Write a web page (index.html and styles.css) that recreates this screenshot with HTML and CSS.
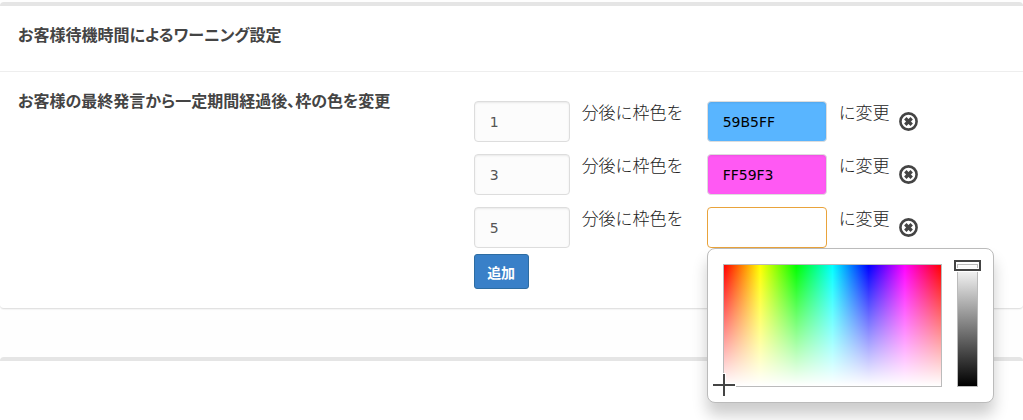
FILE: index.html
```html
<!DOCTYPE html>
<html lang="ja">
<head>
<meta charset="utf-8">
<meta name="viewport" content="width=device-width, initial-scale=1">
<title>ワーニング設定</title>
<link rel="stylesheet" href="styles.css">
</head>
<body>
<svg class="sprite" aria-hidden="true">
  <symbol id="remove" viewBox="0 0 19 19">
    <circle cx="9.5" cy="9.5" r="8.1" fill="none" stroke="currentColor" stroke-width="2.6"/>
    <path d="M6.3 6.3l6.4 6.4M12.7 6.3l-6.4 6.4" stroke="currentColor" stroke-width="3.4"/>
  </symbol>
</svg>
<main class="page">
  <section class="panel">
    <h2 class="panel-title">お客様待機時間によるワーニング設定</h2>
    <form class="panel-body">
      <h3 class="setting-label">お客様の最終発言から一定期間経過後、枠の色を変更</h3>
      <div class="rules">
        <div class="rule">
          <input class="field minutes" type="text" value="1" aria-label="分">
          <span class="after">分後に枠色を</span>
          <input class="field color blue" type="text" value="59B5FF" aria-label="枠色">
          <span class="change">に変更</span>
          <button class="remove" type="button" aria-label="削除"><svg class="icon"><use href="#remove"/></svg></button>
        </div>
        <div class="rule">
          <input class="field minutes" type="text" value="3" aria-label="分">
          <span class="after">分後に枠色を</span>
          <input class="field color pink" type="text" value="FF59F3" aria-label="枠色">
          <span class="change">に変更</span>
          <button class="remove" type="button" aria-label="削除"><svg class="icon"><use href="#remove"/></svg></button>
        </div>
        <div class="rule">
          <input class="field minutes" type="text" value="5" aria-label="分">
          <span class="after">分後に枠色を</span>
          <div class="picker-anchor">
            <input class="field color active" type="text" value="" aria-label="枠色">
            <div class="picker">
              <div class="spectrum">
                <svg class="cross" viewBox="0 0 24 24"><path d="M12 0v24M0 12h24" stroke="#fff" stroke-width="4"/><path d="M12 1v22M1 12h22" stroke="#444" stroke-width="2"/></svg>
              </div>
              <div class="brightness"><span class="handle"></span></div>
            </div>
          </div>
          <span class="change">に変更</span>
          <button class="remove" type="button" aria-label="削除"><svg class="icon"><use href="#remove"/></svg></button>
        </div>
        <button class="add" type="button">追加</button>
      </div>
    </form>
  </section>
  <section class="panel next"></section>
</main>
</body>
</html>
```
FILE: styles.css
```css
* { box-sizing: border-box; }

body {
  margin: 0;
  background: #fefefe;
  color: #444;
  font-family: "Noto Sans CJK JP", sans-serif;
}

.sprite { position: absolute; width: 0; height: 0; }

.page {
  display: flex;
  flex-direction: column;
  gap: 48px;
  min-height: 100vh;
  padding-top: 2px;
}

.panel {
  background: #fff;
  border-top: 4px solid #e5e5e5;
  border-bottom: 1px solid #e2e2e2;
  border-radius: 4px;
  box-shadow: 0 1px 1px rgba(0, 0, 0, 0.04);
}

.next {
  flex: 1;
  border-bottom: 0;
  border-radius: 4px 4px 0 0;
}

.panel-title,
.setting-label {
  margin: 0;
  font-size: 16px;
  line-height: 24px;
  font-weight: 700;
  font-feature-settings: "palt";
}

.panel-title {
  padding: 16px 18px 25px;
  border-bottom: 1px solid #eee;
}

.panel-body {
  display: grid;
  grid-template-columns: 5fr 6fr;
  padding: 16px 18px 19px;
}

.rules { padding: 13px 0 0 7px; }

.rule {
  display: flex;
  align-items: flex-start;
  margin-bottom: 12px;
}

.rule:nth-child(3) { margin-bottom: 6px; }

.field {
  display: block;
  height: 41px;
  padding: 0 15px;
  border: 1px solid #ddd;
  border-radius: 4px;
  background: #fcfcfc;
  box-shadow: inset 0 1px 2px rgba(0, 0, 0, 0.08);
  color: #555;
  font-family: "DejaVu Sans", sans-serif;
  font-size: 14px;
  outline: none;
}

.minutes { width: 96px; }
.color { width: 120px; color: #000; }
.blue { background: #59b5ff; }
.pink { background: #ff59f3; }
.active { background: #fff; border-color: #e9a33b; box-shadow: none; }

.after,
.change {
  color: #222;
  font-size: 17px;
  line-height: 22px;
  font-weight: 300;
  white-space: nowrap;
}

.after { margin: 0 23px 0 12px; }
.change { margin: 0 9px 0 12px; }

.remove {
  margin-top: 11px;
  padding: 0;
  border: 0;
  background: none;
  color: #444;
}

.icon { display: block; width: 19px; height: 19px; }

.add {
  width: 55px;
  height: 35px;
  padding: 0;
  border: 1px solid #2d6ca2;
  border-radius: 3px;
  background: #3980c8;
  color: #fff;
  font: 700 14px/20px "Noto Sans CJK JP", sans-serif;
}

.picker-anchor { position: relative; }

.picker {
  position: absolute;
  top: 100%;
  left: 0;
  z-index: 1;
  display: flex;
  gap: 15px;
  padding: 15px;
  border: 1px solid #bbb;
  border-radius: 8px;
  background: #fff;
  box-shadow: 0 12px 15px rgba(0, 0, 0, 0.2);
}

.spectrum,
.brightness {
  position: relative;
  height: 123px;
  border: 1px solid #bbb;
}

.spectrum {
  width: 219px;
  background:
    linear-gradient(to bottom, rgba(255, 255, 255, 0), #fff),
    linear-gradient(to right, #f00, #ff0, #0f0, #0ff, #00f, #f0f, #f00);
}

.cross {
  position: absolute;
  left: -12px;
  bottom: -11px;
  width: 24px;
  height: 24px;
}

.brightness {
  width: 21px;
  background: linear-gradient(to bottom, #fff, #000);
}

.handle {
  position: absolute;
  top: -5px;
  left: -4px;
  width: 27px;
  height: 11px;
  border: 2px solid #444;
  outline: 1px solid #fff;
  box-shadow: inset 0 0 0 1px #fff;
}
```
